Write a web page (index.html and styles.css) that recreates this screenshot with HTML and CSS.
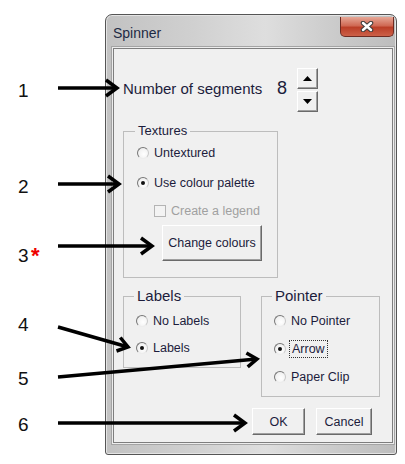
FILE: index.html
```html
<!DOCTYPE html>
<html lang="en">
<head>
    <meta charset="UTF-8">
    <title>Spinner</title>
    <link rel="stylesheet" href="styles.css">
</head>
<body>
    <div class="stage">
        <div class="window">
            <div class="titlebar">
                <span class="title">Spinner</span>
                <span class="close">
                    <svg width="14" height="11" viewBox="0 0 14 11">
                        <path d="M3 2 L11 9 M11 2 L3 9" stroke="#3a3a3a" stroke-width="4.5" stroke-linecap="round"/>
                        <path d="M3 2 L11 9 M11 2 L3 9" stroke="#fff" stroke-width="2.5" stroke-linecap="round"/>
                    </svg>
                </span>
            </div>

            <div class="client">
                <div class="seg-row">
                    <span class="seg-label">Number of segments</span>
                    <span class="seg-value">8</span>
                    <div class="spin">
                        <button class="spin-btn"><svg width="9" height="5" viewBox="0 0 9 5"><path d="M0 5 L4.5 0 L9 5 Z" fill="#000"/></svg></button>
                        <button class="spin-btn"><svg width="9" height="5" viewBox="0 0 9 5"><path d="M0 0 L4.5 5 L9 0 Z" fill="#000"/></svg></button>
                    </div>
                </div>

                <fieldset class="group textures">
                    <legend>Textures</legend>
                    <div class="opt first"><span class="radio"></span>Untextured</div>
                    <div class="opt second"><span class="radio on"></span>Use colour palette</div>
                    <div class="opt check"><span class="box"></span>Create a legend</div>
                    <button class="btn change">Change colours</button>
                </fieldset>

                <div class="pair">
                    <fieldset class="group labels">
                        <legend>Labels</legend>
                        <div class="opt"><span class="radio"></span>No Labels</div>
                        <div class="opt"><span class="radio on"></span>Labels</div>
                    </fieldset>
                    <fieldset class="group pointer">
                        <legend>Pointer</legend>
                        <div class="opt"><span class="radio"></span>No Pointer</div>
                        <div class="opt"><span class="radio on"></span><span class="focus">Arrow</span></div>
                        <div class="opt"><span class="radio"></span>Paper Clip</div>
                    </fieldset>
                </div>

                <div class="actions">
                    <button class="btn ok">OK</button>
                    <button class="btn cancel">Cancel</button>
                </div>
            </div>
        </div>

        <!-- numbered callouts drawn over the dialog -->
        <svg class="notes" width="405" height="464" viewBox="0 0 405 464">
            <g class="num">
                <text x="18" y="97">1</text>
                <text x="18" y="193">2</text>
                <text x="18" y="262">3</text>
                <text x="18" y="331">4</text>
                <text x="18" y="385">5</text>
                <text x="18" y="431">6</text>
            </g>
            <text class="star" x="31" y="263">*</text>
            <g class="arrows">
                <path d="M58 88 H117"/><polyline points="106,80 117,88 106,96"/>
                <path d="M58 184 H119"/><polyline points="108,176 119,184 108,192"/>
                <path d="M58 246 H152"/><polyline points="141,238 152,246 141,254"/>
                <path d="M58 327 L128 347"/><polyline points="120.3,337.5 128,347 116.5,351"/>
                <path d="M58 377 L257 359"/><polyline points="246.4,352.9 257,359 247.7,366.9"/>
                <path d="M58 423 H245"/><polyline points="234,415 245,423 234,431"/>
            </g>
        </svg>
    </div>
</body>
</html>
```

FILE: styles.css
```css
body { margin: 0; background: #fff; font-family: "Liberation Sans", Arial, sans-serif; }
.stage { position: relative; width: 405px; height: 464px; padding: 14px 0 0 105px; box-sizing: border-box; }

/* window frame */
.window { width: 292px; height: 441px; box-sizing: border-box; border: 1px solid #555; border-radius: 7px 7px 3px 3px; padding: 0 3px 11px 7px; background: linear-gradient(90deg, #c2c2c2 0%, #d0d0d0 30%, #dedede 55%, #cacaca 80%, #bdbdbd 100%); box-shadow: inset 0 0 0 1px #e4e4e4; }
.titlebar { height: 33px; display: flex; justify-content: space-between; align-items: flex-start; }
.title { margin-top: 9px; line-height: 18px; font-size: 14px; color: #1e2a44; }
.close { margin-top: 2px; margin-right: -1px; width: 54px; height: 20px; box-sizing: border-box; display: flex; align-items: center; justify-content: center; border: 1px solid #6e2b22; border-top: none; border-radius: 0 0 5px 5px; background: linear-gradient(#e6a796 0%, #d06a55 45%, #bb3f28 55%, #cc6048 100%); }

.client { width: 280px; height: 395px; box-sizing: border-box; border: 1px solid #7e7e7e; box-shadow: 0 0 0 1px #ededed, 0 0 0 2px #a4a4a4; background: #f0f0f0; padding-left: 9px; color: #1c1c3c; }

/* number of segments */
.seg-row { margin-top: 19px; height: 44px; display: flex; align-items: center; }
.seg-label { width: 154px; font-size: 15px; margin-top: -4px; }
.seg-value { width: 20px; font-size: 18px; margin-top: -4px; }
.spin { display: flex; flex-direction: column; gap: 2px; }
.spin-btn { width: 21px; height: 21px; padding: 0; display: flex; align-items: center; justify-content: center; background: #f0f0f0; border: 1px solid; border-color: #fff #6a6a6a #6a6a6a #fff; box-shadow: inset -1px -1px 0 #a0a0a0; }

/* group boxes */
.group { margin: 0; border: 1px solid #bdbdbd; box-sizing: border-box; min-width: 0; }
.group legend { padding: 0 3px; margin-left: -2px; }
.textures { margin-top: 11px; width: 155px; padding: 0 0 16px 13px; }
.textures legend { font-size: 13px; line-height: 16px; }
.labels, .pointer { padding: 0 0 9px 12px; }
.labels legend, .pointer legend { font-size: 15px; line-height: 18px; }
.labels { width: 118px; }
.pointer { width: 119px; }

.opt { height: 20px; display: flex; align-items: center; gap: 5px; font-size: 12.5px; white-space: nowrap; }
.textures .first { margin-top: 4px; }
.textures .second { margin-top: 10px; }
.textures .check { margin-top: 8px; padding-left: 17px; color: #a0a0a0; }
.labels .opt { margin-top: 7px; }
.labels .opt:first-of-type { margin-top: 6px; }
.pointer .opt { margin-top: 8px; }
.pointer .opt:first-of-type { margin-top: 6px; }

.radio { width: 12px; height: 12px; box-sizing: border-box; border-radius: 50%; border: 1px solid; border-color: #777 #c9c9c9 #ececec #777; background: radial-gradient(circle at 60% 60%, #fff 0%, #f2f2f2 60%, #dcdcdc 100%); display: flex; align-items: center; justify-content: center; }
.radio.on::after { content: ""; width: 4px; height: 4px; border-radius: 50%; background: #111; }
.box { width: 12px; height: 12px; box-sizing: border-box; border: 1px solid #b4b4b4; background: #f3f3f3; }
.focus { outline: 1px dotted #333; outline-offset: 1px; padding: 0 1px; }

/* buttons */
.btn { font-family: inherit; font-size: 12.5px; color: #1c1c3c; padding: 0; background: #f0f0f0; border: 1px solid; border-color: #fff #6a6a6a #6a6a6a #fff; box-shadow: inset -1px -1px 0 #a0a0a0; }
.change { margin: 4px 0 0 25px; width: 100px; height: 36px; }
.pair { margin-top: 9px; display: flex; gap: 20px; align-items: flex-start; }
.actions { margin-top: 11px; padding-left: 129px; display: flex; gap: 11px; }
.ok { width: 53px; height: 27px; }
.cancel { width: 56px; height: 27px; }

/* callouts */
.notes { position: absolute; top: 0; left: 0; pointer-events: none; }
.num text { font-family: "Liberation Sans", Arial, sans-serif; font-size: 19px; fill: #111; }
.star { font-family: "Liberation Sans", Arial, sans-serif; font-size: 22px; font-weight: bold; fill: #e00; }
.arrows path, .arrows polyline { fill: none; stroke: #000; stroke-width: 3.5; }
```
